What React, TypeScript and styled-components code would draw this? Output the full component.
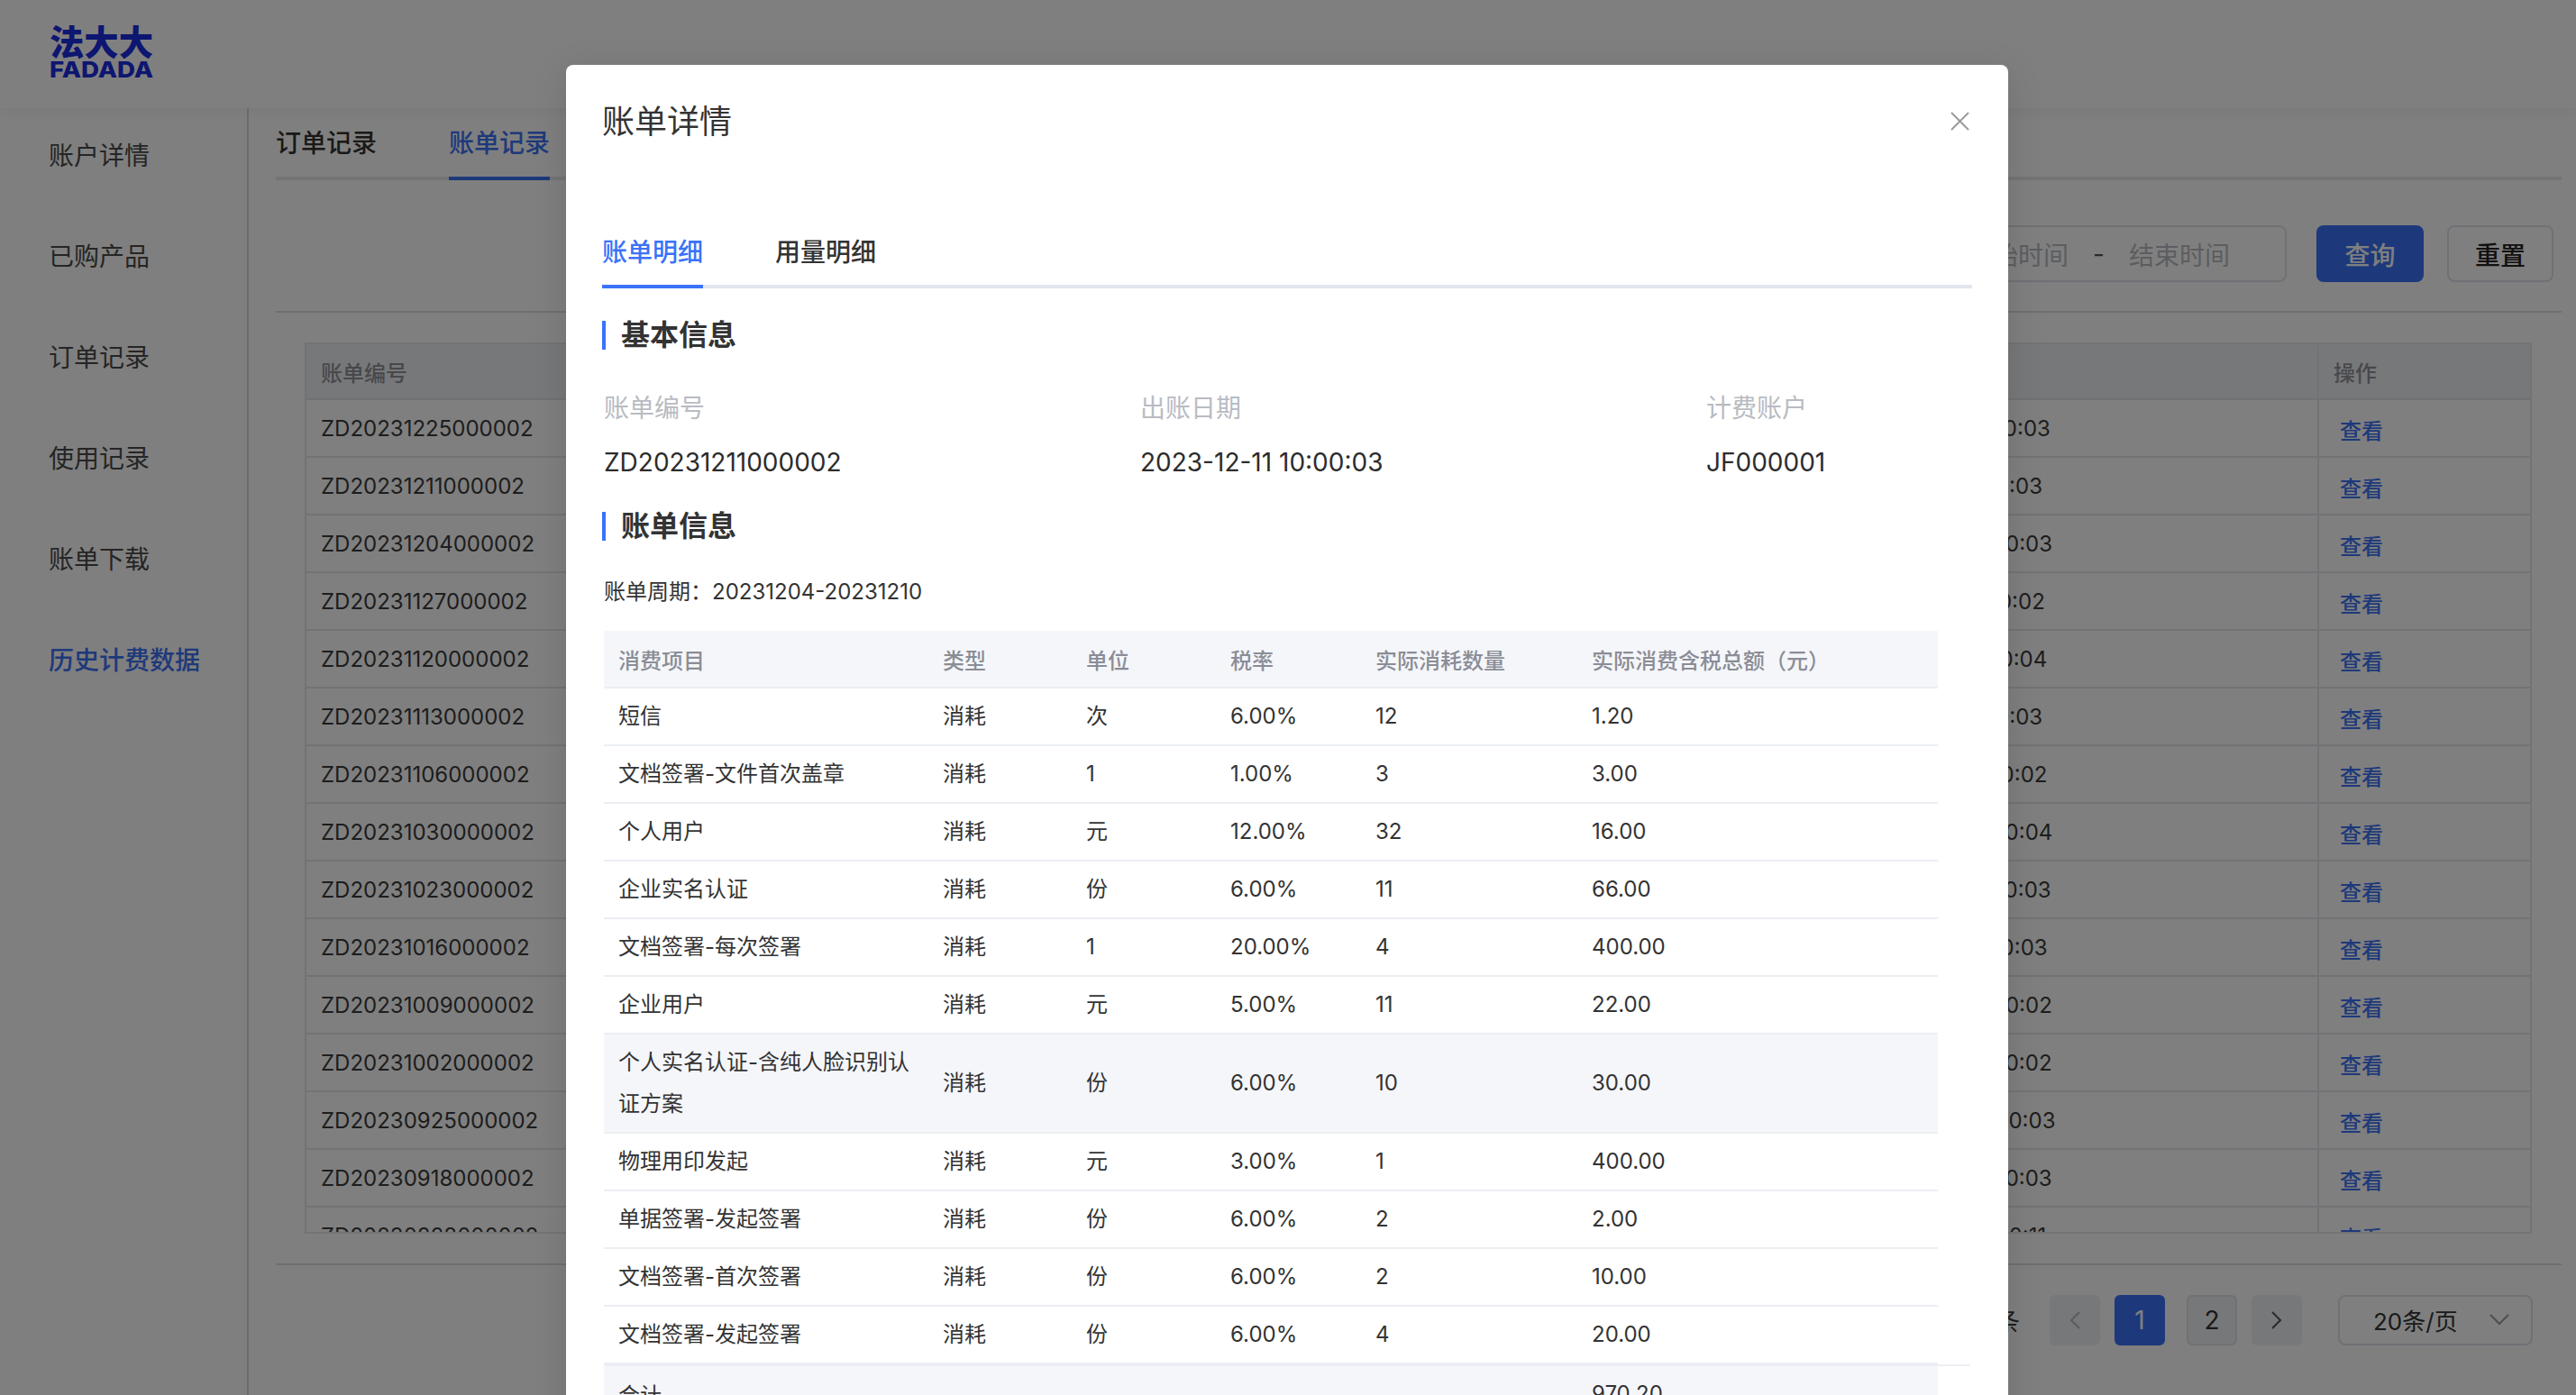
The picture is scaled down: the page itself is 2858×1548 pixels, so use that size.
import React from "react";
import styled, { createGlobalStyle } from "styled-components";

const Global = createGlobalStyle`
  html, body { margin: 0; padding: 0; background: #fff; }
  body { font-family: "Inter", "Noto Sans CJK SC", sans-serif; color: #333; }
  * { box-sizing: border-box; }
  #root { width: 2858px; height: 1548px; }
`;

const Screen = styled.div`
  position: relative;
  width: 2858px;
  height: 1548px;
  overflow: hidden;
  background: #fff;
`;
const Header = styled.header`
  height: 120px;
  padding: 28px 0 0 55px;
  box-shadow: 0 4px 16px rgba(40, 50, 80, 0.06);
  position: relative;
`;
const LogoArt = styled.svg`
  display: block;
  width: 116px;
  height: 60px;
`;
const Body = styled.div`
  display: flex;
  height: 1428px;
`;
const Sidebar = styled.nav`
  width: 276px;
  flex: none;
  border-right: 2px solid #d8d8dc;
  padding: 33px 0 0 54px;
  display: flex;
  flex-direction: column;
  gap: 72px;
`;
const NavItem = styled.div<{ $active?: boolean }>`
  font-size: 28px;
  line-height: 40px;
  color: ${(p) => (p.$active ? "#3c72f5" : "#4a4a4a")};
  font-weight: ${(p) => (p.$active ? 500 : 400)};
`;
const Main = styled.main`
  flex: 1;
  padding: 0 16px 0 30px;
  min-width: 0;
`;
const PageTabs = styled.div`
  height: 80px;
  display: flex;
  gap: 80px;
  border-bottom: 4px solid #e8e9ee;
`;
const PageTab = styled.div<{ $active?: boolean }>`
  height: 80px;
  padding-top: 19px;
  font-size: 28px;
  line-height: 40px;
  font-weight: 500;
  color: ${(p) => (p.$active ? "#3c72f5" : "#333")};
  border-bottom: 4px solid ${(p) => (p.$active ? "#3c72f5" : "transparent")};
`;
const Filter = styled.div`
  height: 147px;
  padding: 50px 9px 0 0;
  display: flex;
  justify-content: flex-end;
  align-items: flex-start;
  border-bottom: 2px solid #dedfe6;
`;
const DateInput = styled.div`
  height: 63px;
  border: 2px solid #e0e2ea;
  border-radius: 8px;
  padding: 0 61px 0 40px;
  display: flex;
  align-items: center;
  font-size: 28px;
  color: #b8bac2;
  margin-right: 33px;
`;
const DateDash = styled.span`
  margin: 0 27px;
  color: #555;
`;
const QueryButton = styled.div`
  width: 119px;
  height: 63px;
  border-radius: 8px;
  background: #3a72f8;
  color: #fff;
  font-size: 28px;
  font-weight: 500;
  display: flex;
  align-items: center;
  justify-content: center;
`;
const ResetButton = styled(QueryButton)`
  width: 118px;
  margin-left: 26px;
  background: #fff;
  color: #222;
  border: 2px solid #e0e2ea;
`;
const BillsBox = styled.div`
  margin: 33px 33px 0 32px;
  height: 989px;
  border: 2px solid #e6e7ee;
  overflow: hidden;
`;
const BillsTable = styled.table`
  width: 100%;
  table-layout: fixed;
  border-collapse: separate;
  border-spacing: 0;
`;
const BillsHead = styled.th<{ $op?: boolean }>`
  height: 62px;
  padding: 0 16px;
  text-align: left;
  font-size: 24px;
  font-weight: 500;
  background: #eff0f2;
  color: #8f9199;
  border-bottom: 2px solid #e2e3ea;
  border-left: ${(p) => (p.$op ? "2px solid #e6e7ee" : "none")};
`;
const BillsCell = styled.td<{ $op?: boolean }>`
  height: 64px;
  padding: 0 16px;
  font-size: 24px;
  color: #3a3a3a;
  border-bottom: 2px solid #e6e7ee;
  border-left: ${(p) => (p.$op ? "2px solid #e6e7ee" : "none")};
`;
const ViewLink = styled.span`
  display: inline-block;
  margin: 3px 0 0 7px;
  color: #3c72f5;
  font-weight: 500;
`;
const Pager = styled.div`
  margin-top: 33px;
  border-top: 2px solid #dedfe6;
  padding: 33px 32px 0 0;
  display: flex;
  justify-content: flex-end;
  align-items: center;
  height: 90px;
  font-size: 28px;
  color: #3a3a3a;
`;
const PagerTotal = styled.span`
  margin-right: 33px;
`;
const PageArrow = styled.div`
  width: 56px;
  height: 56px;
  border-radius: 6px;
  background: #eff0f2;
  display: flex;
  align-items: center;
  justify-content: center;
`;
const PageNum = styled.div<{ $active?: boolean }>`
  width: 56px;
  height: 56px;
  border-radius: 6px;
  margin: ${(p) => (p.$active ? "0 24px 0 16px" : "0 16px 0 0")};
  background: ${(p) => (p.$active ? "#3a72f8" : "#eff0f2")};
  color: ${(p) => (p.$active ? "#fff" : "#333")};
  border: 2px solid ${(p) => (p.$active ? "#3a72f8" : "#e0e2ea")};
  display: flex;
  align-items: center;
  justify-content: center;
  font-size: 28px;
`;
const PageSize = styled.div`
  width: 216px;
  height: 56px;
  margin-left: 40px;
  border: 2px solid #e0e2ea;
  border-radius: 8px;
  padding: 0 24px 0 37px;
  display: flex;
  align-items: center;
  justify-content: space-between;
  font-size: 26px;
  color: #333;
`;
const Overlay = styled.div`
  position: absolute;
  inset: 0;
  background: rgba(0, 0, 0, 0.5);
`;
const Modal = styled.section`
  position: absolute;
  left: 628px;
  top: 72px;
  width: 1600px;
  height: 1600px;
  padding: 38px 40px 0;
  background: #fff;
  border-radius: 8px;
  box-shadow: 0 8px 40px rgba(0, 0, 0, 0.12);
`;
const CloseIcon = styled.svg`
  position: absolute;
  right: 43px;
  top: 52px;
  width: 21px;
  height: 21px;
`;
const ModalTitle = styled.h1`
  margin: 0;
  font-size: 36px;
  line-height: 50px;
  font-weight: 400;
  color: #333;
`;
const ModalTabs = styled.div`
  display: flex;
  gap: 80px;
  margin-top: 100px;
  width: 1520px;
  height: 60px;
  border-bottom: 4px solid #e4e6ee;
`;
const ModalTab = styled.div<{ $active?: boolean }>`
  height: 60px;
  font-size: 28px;
  line-height: 40px;
  font-weight: 500;
  color: ${(p) => (p.$active ? "#3a72f8" : "#333")};
  border-bottom: 4px solid ${(p) => (p.$active ? "#3a72f8" : "transparent")};
`;
const SectionTitle = styled.h2<{ $top: number }>`
  margin: ${(p) => p.$top}px 0 0;
  height: 32px;
  padding-left: 17px;
  border-left: 4px solid #3a72f8;
  font-size: 32px;
  line-height: 32px;
  font-weight: 700;
  color: #333;
`;
const InfoGrid = styled.div`
  margin: 45px 0 0 2px;
  display: grid;
  grid-template-columns: 595px 628px auto;
  row-gap: 20px;
  font-size: 28px;
  line-height: 40px;
`;
const InfoLabel = styled.div`
  color: #b8bbc2;
`;
const InfoValue = styled.div`
  color: #2c2c2c;
`;
const Cycle = styled.div`
  margin: 37px 0 23px 2px;
  font-size: 24px;
  line-height: 40px;
  color: #333;
`;
const DetailBox = styled.div`
  margin-left: 2px;
  width: 1516px;
`;
const DetailTable = styled.table`
  width: 1480px;
  table-layout: fixed;
  border-collapse: separate;
  border-spacing: 0;
`;
const DetailHead = styled.th`
  height: 64px;
  padding: 0 16px;
  text-align: left;
  font-size: 24px;
  font-weight: 500;
  background: #f5f6fa;
  color: #8a8d96;
  border-bottom: 2px solid #eceef3;
`;
const DetailRow = styled.tr<{ $tall?: boolean }>`
  background: ${(p) => (p.$tall ? "#f5f6fa" : "#fff")};
`;
const DetailCell = styled.td<{ $tall?: boolean }>`
  height: ${(p) => (p.$tall ? 110 : 64)}px;
  padding: 0 16px;
  font-size: 24px;
  line-height: 46px;
  color: #333;
  border-bottom: 2px solid #eceef3;
`;
const DetailRule = styled.div`
  height: 2px;
  background: #eceef3;
`;
const SumCell = styled.td`
  height: 60px;
  padding: 0 16px;
  font-size: 24px;
  background: #f5f6fa;
  color: #333;
`;

const navItems = ["账户详情", "已购产品", "订单记录", "使用记录", "账单下载", "历史计费数据"];
const bills = [
  ["ZD20231225000002", "2023-12-25 10:00:03"],
  ["ZD20231211000002", "2023-12-11 10:00:03"],
  ["ZD20231204000002", "2023-12-04 10:00:03"],
  ["ZD20231127000002", "2023-11-27 10:00:02"],
  ["ZD20231120000002", "2023-11-20 10:00:04"],
  ["ZD20231113000002", "2023-11-13 10:00:03"],
  ["ZD20231106000002", "2023-11-06 10:00:02"],
  ["ZD20231030000002", "2023-10-30 10:00:04"],
  ["ZD20231023000002", "2023-10-23 10:00:03"],
  ["ZD20231016000002", "2023-10-16 10:00:03"],
  ["ZD20231009000002", "2023-10-09 10:00:02"],
  ["ZD20231002000002", "2023-10-02 10:00:02"],
  ["ZD20230925000002", "2023-09-25 10:00:03"],
  ["ZD20230918000002", "2023-09-18 10:00:03"],
  ["ZD20230828000002", "2023-08-28 10:00:11"],
];
const heads = ["消费项目", "类型", "单位", "税率", "实际消耗数量", "实际消费含税总额（元）"];
const colWidths = [360, 159, 160, 161, 240, 400];
const lines = [
  ["短信", "消耗", "次", "6.00%", "12", "1.20"],
  ["文档签署-文件首次盖章", "消耗", "1", "1.00%", "3", "3.00"],
  ["个人用户", "消耗", "元", "12.00%", "32", "16.00"],
  ["企业实名认证", "消耗", "份", "6.00%", "11", "66.00"],
  ["文档签署-每次签署", "消耗", "1", "20.00%", "4", "400.00"],
  ["企业用户", "消耗", "元", "5.00%", "11", "22.00"],
  ["个人实名认证-含纯人脸识别认证方案", "消耗", "份", "6.00%", "10", "30.00"],
  ["物理用印发起", "消耗", "元", "3.00%", "1", "400.00"],
  ["单据签署-发起签署", "消耗", "份", "6.00%", "2", "2.00"],
  ["文档签署-首次签署", "消耗", "份", "6.00%", "2", "10.00"],
  ["文档签署-发起签署", "消耗", "份", "6.00%", "4", "20.00"],
];

function Logo() {
  return (
    <LogoArt viewBox="0 0 116 60">
      <text
        x="0"
        y="33"
        fontFamily="'Noto Sans CJK SC', sans-serif"
        fontWeight="900"
        fontSize="39"
        fill="#1b2ce0"
        textLength="115"
        lengthAdjust="spacingAndGlyphs"
      >
        法大大
      </text>
      <text
        x="0"
        y="58"
        fontFamily="'Inter', sans-serif"
        fontWeight="800"
        fontSize="25"
        fill="#1b2ce0"
        textLength="115"
        lengthAdjust="spacingAndGlyphs"
      >
        FADADA
      </text>
    </LogoArt>
  );
}

function Chevron({ dir, color }: { dir: "left" | "right" | "down"; color: string }) {
  if (dir === "down") {
    return (
      <svg width="22" height="13" viewBox="0 0 22 13" fill="none" stroke={color} strokeWidth="2">
        <path d="M1 1l10 10L21 1" />
      </svg>
    );
  }
  return (
    <svg width="12" height="20" viewBox="0 0 12 20" fill="none" stroke={color} strokeWidth="2">
      <path d={dir === "left" ? "M11 1L2 10l9 9" : "M1 1l9 9-9 9"} />
    </svg>
  );
}

export default function App() {
  return (
    <Screen>
      <Global />
      <Header>
        <Logo />
      </Header>
      <Body>
        <Sidebar>
          {navItems.map((n, i) => (
            <NavItem key={n} $active={i === navItems.length - 1}>
              {n}
            </NavItem>
          ))}
        </Sidebar>
        <Main>
          <PageTabs>
            <PageTab>订单记录</PageTab>
            <PageTab $active>账单记录</PageTab>
          </PageTabs>
          <Filter>
            <DateInput>
              开始时间
              <DateDash>-</DateDash>
              结束时间
            </DateInput>
            <QueryButton>查询</QueryButton>
            <ResetButton>重置</ResetButton>
          </Filter>
          <BillsBox>
            <BillsTable>
              <colgroup>
                <col style={{ width: 1679 }} />
                <col style={{ width: 552 }} />
                <col style={{ width: 240 }} />
              </colgroup>
              <thead>
                <tr>
                  <BillsHead>账单编号</BillsHead>
                  <BillsHead>出账日期</BillsHead>
                  <BillsHead $op>操作</BillsHead>
                </tr>
              </thead>
              <tbody>
                {bills.map(([id, date]) => (
                  <tr key={id}>
                    <BillsCell>{id}</BillsCell>
                    <BillsCell>{date}</BillsCell>
                    <BillsCell $op>
                      <ViewLink>查看</ViewLink>
                    </BillsCell>
                  </tr>
                ))}
              </tbody>
            </BillsTable>
          </BillsBox>
          <Pager>
            <PagerTotal>共 30 条</PagerTotal>
            <PageArrow>
              <Chevron dir="left" color="#b4b6bc" />
            </PageArrow>
            <PageNum $active>1</PageNum>
            <PageNum>2</PageNum>
            <PageArrow>
              <Chevron dir="right" color="#555" />
            </PageArrow>
            <PageSize>
              20条/页
              <Chevron dir="down" color="#9a9ca4" />
            </PageSize>
          </Pager>
        </Main>
      </Body>
      <Overlay />
      <Modal>
        <ModalTitle>账单详情</ModalTitle>
        <CloseIcon viewBox="0 0 21 21" fill="none" stroke="#9a9a9a" strokeWidth="2">
          <path d="M1 1l19 19M20 1L1 20" />
        </CloseIcon>
        <ModalTabs>
          <ModalTab $active>账单明细</ModalTab>
          <ModalTab>用量明细</ModalTab>
        </ModalTabs>
        <SectionTitle $top={36}>基本信息</SectionTitle>
        <InfoGrid>
          <InfoLabel>账单编号</InfoLabel>
          <InfoLabel>出账日期</InfoLabel>
          <InfoLabel>计费账户</InfoLabel>
          <InfoValue>ZD20231211000002</InfoValue>
          <InfoValue>2023-12-11 10:00:03</InfoValue>
          <InfoValue>JF000001</InfoValue>
        </InfoGrid>
        <SectionTitle $top={35}>账单信息</SectionTitle>
        <Cycle>账单周期：20231204-20231210</Cycle>
        <DetailBox>
          <DetailTable>
            <colgroup>
              {colWidths.map((w) => (
                <col key={w} style={{ width: w }} />
              ))}
            </colgroup>
            <thead>
              <tr>
                {heads.map((h) => (
                  <DetailHead key={h}>{h}</DetailHead>
                ))}
              </tr>
            </thead>
            <tbody>
              {lines.map((row, r) => {
                const tall = row[0].length > 14;
                return (
                  <DetailRow key={r} $tall={tall}>
                    {row.map((c, i) => (
                      <DetailCell key={i} $tall={tall}>
                        {c}
                      </DetailCell>
                    ))}
                  </DetailRow>
                );
              })}
            </tbody>
          </DetailTable>
          <DetailRule />
          <DetailTable>
            <colgroup>
              {colWidths.map((w) => (
                <col key={w} style={{ width: w }} />
              ))}
            </colgroup>
            <tbody>
              <tr>
                <SumCell>合计</SumCell>
                <SumCell />
                <SumCell />
                <SumCell />
                <SumCell />
                <SumCell>970.20</SumCell>
              </tr>
            </tbody>
          </DetailTable>
        </DetailBox>
      </Modal>
    </Screen>
  );
}
